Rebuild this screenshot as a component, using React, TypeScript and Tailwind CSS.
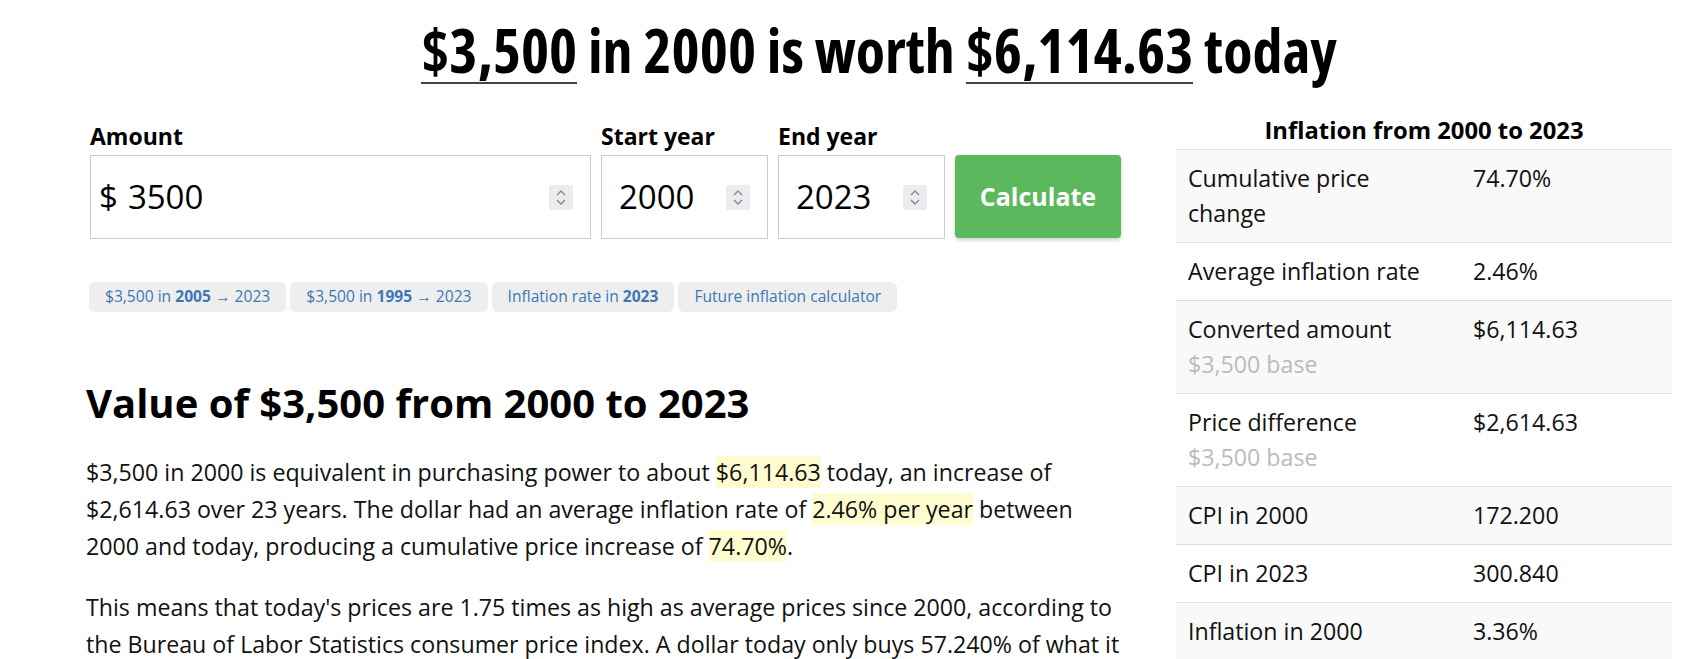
function Spinner() {
  return (
    <div className="w-[24px] h-[25px] bg-[#ececf0] rounded-[2px] flex flex-col items-center justify-center gap-[3px]">
      <svg width="10" height="6" viewBox="0 0 10 6" fill="none">
        <path d="M1 5 L5 1 L9 5" stroke="#8a8a8a" strokeWidth="1.4" />
      </svg>
      <svg width="10" height="6" viewBox="0 0 10 6" fill="none">
        <path d="M1 1 L5 5 L9 1" stroke="#8a8a8a" strokeWidth="1.4" />
      </svg>
    </div>
  );
}

function Field({ label, value, prefix, width }: { label: string; value: string; prefix?: boolean; width: string }) {
  return (
    <div className={`flex flex-col ${width}`}>
      <label className="text-[23px] leading-[37px] font-bold text-black">{label}</label>
      <div className={`h-[84px] border border-[#cccccc] bg-white flex items-center pr-[17px] ${prefix ? 'pl-[8px]' : 'pl-[17px]'}`}>
        <span className="flex-1 text-[33px] text-black">
          {prefix && <span className="mr-[10px]">$</span>}
          {value}
        </span>
        <Spinner />
      </div>
    </div>
  );
}

function Chip({ children }: { children: React.ReactNode }) {
  return (
    <a className="h-[30px] px-[16px] flex items-center rounded-[6px] bg-[#eeeeee] text-[15.6px] text-[#3b78b4]">
      {children}
    </a>
  );
}

function Hl({ children }: { children: React.ReactNode }) {
  return <span className="bg-[#fffdd0]">{children}</span>;
}

const rows: { label: string; value: string; sub?: string }[] = [
  { label: 'Cumulative price change', value: '74.70%' },
  { label: 'Average inflation rate', value: '2.46%' },
  { label: 'Converted amount', value: '$6,114.63', sub: '$3,500 base' },
  { label: 'Price difference', value: '$2,614.63', sub: '$3,500 base' },
  { label: 'CPI in 2000', value: '172.200' },
  { label: 'CPI in 2023', value: '300.840' },
  { label: 'Inflation in 2000', value: '3.36%' },
];

export default function App() {
  return (
    <div className="w-full h-[659px] overflow-hidden bg-white text-[#111111] font-['Open_Sans',sans-serif] pl-[86px] pr-[22px] pt-[17px]">
      {/* Headline */}
      <h1 className="text-center text-[60px] leading-[66px] font-bold text-black [font-stretch:condensed]">
        <span className="inline-block leading-[64px] border-b-2 border-[#444444]">$3,500</span> in 2000 is worth{' '}
        <span className="inline-block leading-[64px] border-b-2 border-[#444444]">$6,114.63</span> today
      </h1>

      <div className="flex gap-[50px] mt-[28px]">
        {/* Left column */}
        <div className="w-[1040px] pt-[6px]">
          <div className="flex items-end gap-[10px] ml-[4px]">
            <Field label="Amount" value="3500" prefix width="w-[501px]" />
            <Field label="Start year" value="2000" width="w-[167px]" />
            <Field label="End year" value="2023" width="w-[167px]" />
            <button className="w-[166px] h-[83px] mb-[1px] rounded-[4px] bg-[#5cb85c] text-white text-[25px] font-bold shadow-[0_2px_4px_rgba(0,0,0,0.2)]">
              Calculate
            </button>
          </div>

          <div className="flex gap-[4px] mt-[43px] ml-[3px]">
            <Chip>$3,500 in&nbsp;<b>2005</b>&nbsp;→ 2023</Chip>
            <Chip>$3,500 in&nbsp;<b>1995</b>&nbsp;→ 2023</Chip>
            <Chip>Inflation rate in&nbsp;<b>2023</b></Chip>
            <Chip>Future inflation calculator</Chip>
          </div>

          <h2 className="mt-[69px] text-[40px] leading-[44px] font-bold text-black">Value of $3,500 from 2000 to 2023</h2>

          <p className="mt-[29px] text-[23.2px] leading-[36.8px]">
            $3,500 in 2000 is equivalent in purchasing power to about <Hl>$6,114.63</Hl> today, an increase of
            $2,614.63 over 23 years. The dollar had an average inflation rate of <Hl>2.46% per year</Hl> between
            2000 and today, producing a cumulative price increase of <Hl>74.70%</Hl>.
          </p>
          <p className="mt-[25px] text-[23.2px] leading-[36.8px]">
            This means that today's prices are 1.75 times as high as average prices since 2000, according to
            the Bureau of Labor Statistics consumer price index. A dollar today only buys 57.240% of what it
            could buy back then.
          </p>
        </div>

        {/* Right column */}
        <div className="w-[496px]">
          <div className="text-center text-[23.8px] leading-[37px] font-bold text-black">Inflation from 2000 to 2023</div>
          <table className="w-full border-collapse text-[23.2px] leading-[35px]">
            <tbody>
              {rows.map((r, i) => (
                <tr key={r.label} className={`border-t border-[#dddddd] ${i % 2 === 0 ? 'bg-[#f9f9f9]' : 'bg-white'}`}>
                  <td className="w-[284px] align-top py-[11px] px-[12px]">
                    {r.label}
                    {r.sub && <div className="text-[#bbbbbb]">{r.sub}</div>}
                  </td>
                  <td className="align-top py-[11px] pl-[13px] pr-0">{r.value}</td>
                </tr>
              ))}
            </tbody>
          </table>
        </div>
      </div>
    </div>
  );
}
